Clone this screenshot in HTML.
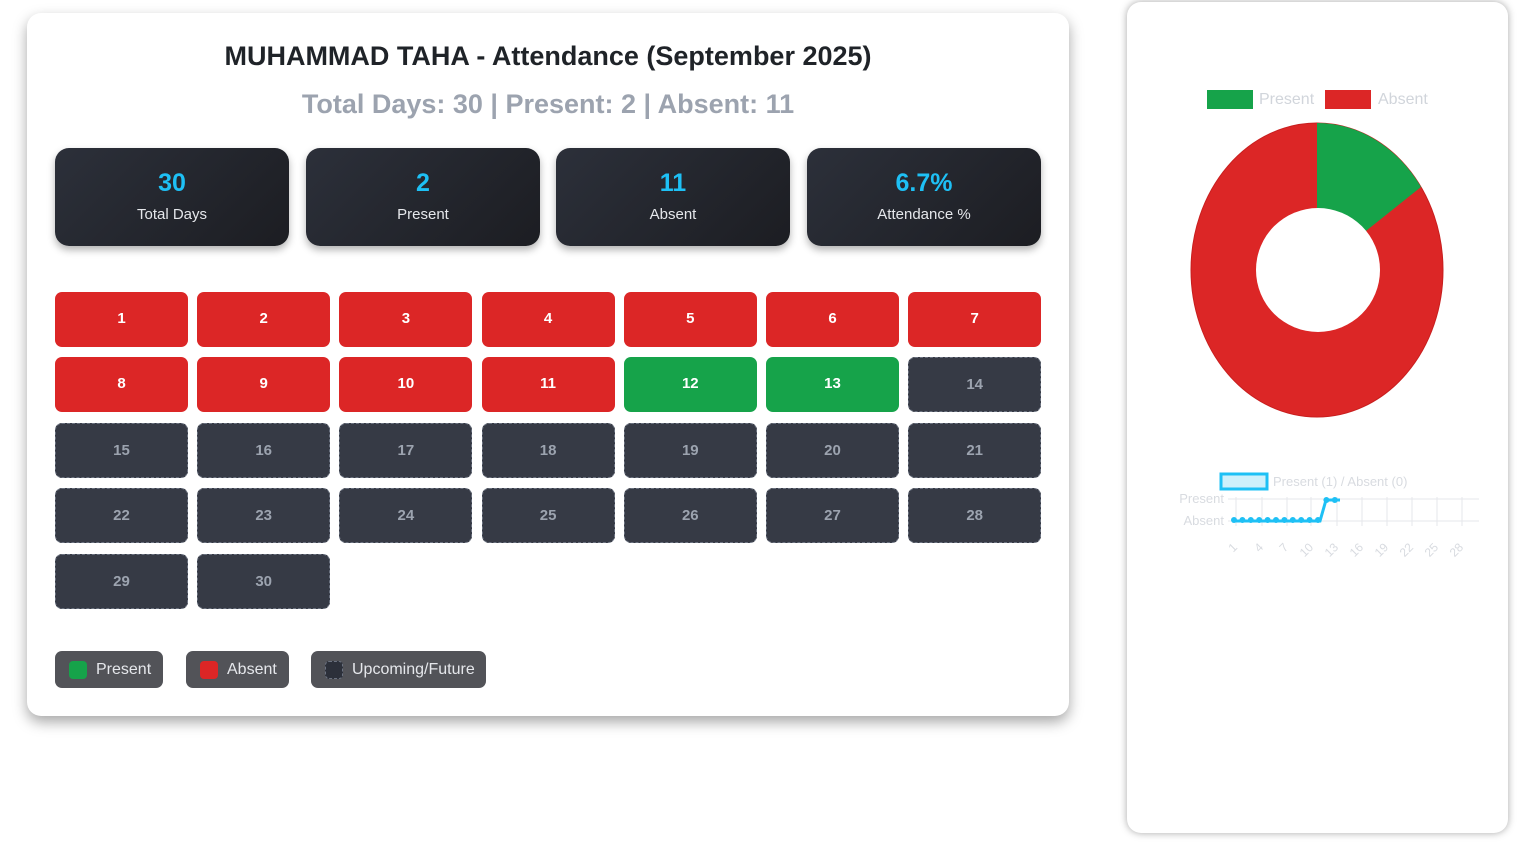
<!DOCTYPE html>
<html><head><meta charset="utf-8"><style>
*{box-sizing:border-box;margin:0;padding:0}
body{width:1522px;height:844px;background:#fff;font-family:"Liberation Sans",Arial,sans-serif;position:relative;overflow:hidden}
.card{position:absolute;left:27px;top:13px;width:1042px;height:703px;background:#fff;border-radius:14px;box-shadow:0 6px 14px rgba(0,0,0,.35)}
h1{position:absolute;left:0;right:0;top:28px;text-align:center;font-size:27px;font-weight:bold;color:#1f2328}
h2{position:absolute;left:0;right:0;top:76px;text-align:center;font-size:27px;font-weight:bold;color:#9ca3af}
.stat{position:absolute;top:135px;width:234px;height:98px;border-radius:14px;background:linear-gradient(135deg,#2c303a,#1c1d22);box-shadow:0 4px 8px rgba(0,0,0,.3);text-align:center}
.stat b{display:block;margin-top:21px;font-size:25px;color:#1ec0f5}
.stat span{display:block;margin-top:8px;font-size:15px;color:#e5e7eb}
.d{position:absolute;width:133px;height:55px;border-radius:7px;text-align:center;line-height:53px;font-weight:bold;font-size:15px;color:#fff}
.r{background:#dc2626}.g{background:#16a34a}.f{background:#363a45;border:1px dashed #6b7280;color:#9ca3af;line-height:53px}
.chip{position:absolute;top:638px;height:37px;border-radius:7px;background:#525358;color:#e5e7eb;font-size:16px;line-height:37px;padding-left:41px}
.chip i{position:absolute;left:14px;top:10px;width:18px;height:18px;border-radius:4px}
.side{position:absolute;left:1127px;top:2px;width:381px;height:831px;border-radius:14px;background:#fff;box-shadow:0 0 8px rgba(0,0,0,.35)}
</style></head><body>
<div class="card">
<h1>MUHAMMAD TAHA - Attendance (September 2025)</h1>
<h2>Total Days: 30 | Present: 2 | Absent: 11</h2>
<div class="stat" style="left:28px"><b>30</b><span>Total Days</span></div>
<div class="stat" style="left:279px"><b>2</b><span>Present</span></div>
<div class="stat" style="left:529px"><b>11</b><span>Absent</span></div>
<div class="stat" style="left:780px"><b>6.7%</b><span>Attendance %</span></div>
<div id="g"></div>
<div class="chip" style="left:28px;width:108px"><i style="background:#16a34a"></i>Present</div>
<div class="chip" style="left:159px;width:103px"><i style="background:#dc2626"></i>Absent</div>
<div class="chip" style="left:284px;width:175px"><i style="background:#2c303a;border:1px dashed #6b7280"></i>Upcoming/Future</div>
</div>
<div class="side"></div>
<svg style="position:absolute;left:0;top:0" width="1522" height="844" font-family="Liberation Sans,Arial,sans-serif">
<rect x="1207" y="90" width="46" height="19" fill="#16a34a"/><text x="1259" y="104" font-size="16" fill="#d1d5db">Present</text>
<rect x="1325" y="90" width="46" height="19" fill="#dc2626"/><text x="1378" y="104" font-size="16" fill="#d1d5db">Absent</text>
<ellipse cx="1317" cy="270" rx="126" ry="147" fill="#dc2626" stroke="#c81e1e"/>
<path d="M1317 270 L1317 123 A126 147 0 0 1 1421 187 Z" fill="#16a34a"/>
<circle cx="1318" cy="270" r="62" fill="#fff"/>
<rect x="1221" y="474" width="46" height="15" fill="#cdf0fb" stroke="#1ec0f5" stroke-width="3"/>
<text x="1273" y="486" font-size="13" fill="#d8dbe0">Present (1) / Absent (0)</text>
<text x="1224" y="503" font-size="13" fill="#d8dbe0" text-anchor="end">Present</text>
<text x="1224" y="525" font-size="13" fill="#d8dbe0" text-anchor="end">Absent</text>
<g stroke="#e5e7eb"><line x1="1228" y1="499" x2="1479" y2="499"/><line x1="1228" y1="521" x2="1479" y2="521"/>
<line x1="1236" y1="497" x2="1236" y2="526"/><line x1="1262" y1="497" x2="1262" y2="526"/><line x1="1287" y1="497" x2="1287" y2="526"/><line x1="1311" y1="497" x2="1311" y2="526"/><line x1="1337" y1="497" x2="1337" y2="526"/><line x1="1362" y1="497" x2="1362" y2="526"/><line x1="1387" y1="497" x2="1387" y2="526"/><line x1="1412" y1="497" x2="1412" y2="526"/><line x1="1437" y1="497" x2="1437" y2="526"/><line x1="1462" y1="497" x2="1462" y2="526"/></g>
<polyline points="1233,521 1320,521 1326,500 1340,500" fill="none" stroke="#1ec0f5" stroke-width="3"/>
<g fill="#1ec0f5" id="pts"></g>
<g font-size="12" fill="#d8dbe0">
<text transform="translate(1238,548) rotate(-45)" text-anchor="end">1</text><text transform="translate(1264,548) rotate(-45)" text-anchor="end">4</text><text transform="translate(1289,548) rotate(-45)" text-anchor="end">7</text><text transform="translate(1314,548) rotate(-45)" text-anchor="end">10</text><text transform="translate(1339,548) rotate(-45)" text-anchor="end">13</text><text transform="translate(1364,548) rotate(-45)" text-anchor="end">16</text><text transform="translate(1389,548) rotate(-45)" text-anchor="end">19</text><text transform="translate(1414,548) rotate(-45)" text-anchor="end">22</text><text transform="translate(1439,548) rotate(-45)" text-anchor="end">25</text><text transform="translate(1464,548) rotate(-45)" text-anchor="end">28</text></g>
</svg>
<script>
var h='';for(var i=1;i<=30;i++){var c=(i>=12&&i<=13)?'g':(i<=11?'r':'f');var r=Math.floor((i-1)/7),k=(i-1)%7;h+='<div class="d '+c+'" style="left:'+(28+k*142.2)+'px;top:'+(278.5+r*65.5)+'px">'+i+'</div>';}
document.getElementById('g').innerHTML=h;
var p='';for(var d=1;d<=13;d++){var x=1234+(d-1)*8.4,y=d>=12?500:520;p+='<circle cx="'+x+'" cy="'+y+'" r="3"/>';}
document.getElementById('pts').innerHTML=p;
</script>
</body></html>
